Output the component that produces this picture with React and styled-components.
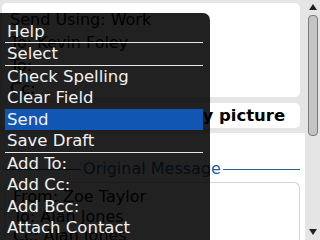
import React from 'react';
import styled, { createGlobalStyle } from 'styled-components';

const Global = createGlobalStyle`
  html, body { margin: 0; padding: 0; background: #e5e5e5; overflow: hidden; }
  body { font-family: "DejaVu Sans", "Noto Sans", sans-serif; }
`;

const Screen = styled.div`
  position: relative;
  width: 320px;
  height: 240px;
  overflow: hidden;
  display: flex;
  background: #e5e5e5;
`;

const Main = styled.div`
  flex: 1;
  min-width: 0;
  display: flex;
  flex-direction: column;
`;

const Header = styled.div`
  display: flex;
  flex-direction: column;
  gap: 6px;
  padding: 3px 5px 5px 2px;
`;

const Panel = styled.div`
  background: #fff;
  border-radius: 5px;
  height: ${p => p.$h}px;
  padding: ${p => p.$pad};
  box-sizing: border-box;
  display: flex;
  flex-direction: column;
  overflow: hidden;
`;

const FieldLine = styled.div`
  font-size: 16px;
  line-height: 23px;
  color: #000;
  white-space: nowrap;
`;

const SubjectLine = styled.div`
  font-size: 16px;
  line-height: 23px;
  color: #000;
  white-space: nowrap;
  display: flex;
  gap: 72px;
`;

const Bold = styled.span`
  font-weight: bold;
  font-size: 16.5px;
`;

const Body = styled.div`
  flex: 1;
  background: #fff;
  display: flex;
  flex-direction: column;
  padding: 27px 5px 0 4px;
`;

const Divider = styled.div`
  display: flex;
  align-items: center;
  gap: 2px;
  color: #1f5ea6;
  font-size: 16px;
  line-height: 18px;
  &::before, &::after {
    content: '';
    flex: 1;
    height: 1px;
    background: #1f5ea6;
  }
`;

const Quote = styled.div`
  margin-top: 4px;
  flex: 1;
  border: 1.5px solid #d4d4d4;
  border-bottom: none;
  border-radius: 6px 6px 0 0;
  padding: 4px 8px;
  display: flex;
  flex-direction: column;
`;

const QuoteLine = styled.div`
  font-size: 16px;
  line-height: 19.5px;
  color: #000;
  white-space: nowrap;
`;

const ScrollCol = styled.div`
  width: 15px;
  display: flex;
  flex-direction: column;
  align-items: center;
  padding: 4px 0 5px;
  box-sizing: border-box;
  background: #e5e5e5;
`;

const Arrow = styled.div`
  width: 0;
  height: 0;
  border-left: 4px solid transparent;
  border-right: 4px solid transparent;
  ${p => p.$down
    ? 'border-top: 6px solid #222; margin-top: auto;'
    : 'border-bottom: 6px solid #222;'}
`;

const Thumb = styled.div`
  margin-top: 5px;
  width: 8px;
  height: 119px;
  border-radius: 4px;
  background: #c4c4c4;
  border: 1px solid #7a7a7a;
`;

const Menu = styled.div`
  position: absolute;
  left: 0;
  top: 13px;
  width: 210px;
  height: 240px;
  box-sizing: border-box;
  padding: 7.5px 7px 0 5px;
  background: rgba(0, 0, 0, 0.87);
  border-top-right-radius: 7px;
  display: flex;
  flex-direction: column;
`;

const Item = styled.div`
  height: 21.5px;
  line-height: 21.5px;
  padding-left: 2px;
  font-size: 16.5px;
  color: #f2f2f2;
  white-space: nowrap;
  background: ${p => (p.$active ? '#1156b2' : 'transparent')};
`;

const Sep = styled.div`
  height: 1px;
  background: #e8e8e8;
`;

const menu = [
  'Help', '-', 'Select', '-', 'Check Spelling', 'Clear Field', 'Send', 'Save Draft', '-',
  'Add To:', 'Add Cc:', 'Add Bcc:', 'Attach Contact',
];

export default function App() {
  return (
    <>
      <Global />
      <Screen>
        <Main>
          <Header>
            <Panel $h={94} $pad="5px 8px 0">
              <FieldLine>Send Using: Work</FieldLine>
              <FieldLine>To: Kevin Foley</FieldLine>
              <FieldLine>To:</FieldLine>
              <FieldLine>Cc:</FieldLine>
            </Panel>
            <Panel $h={25} $pad="1px 8px">
              <SubjectLine>
                <span>Subject:</span>
                <Bold>Fw: My picture</Bold>
              </SubjectLine>
            </Panel>
          </Header>
          <Body>
            <Divider>Original Message</Divider>
            <Quote>
              <QuoteLine>From: Zoe Taylor</QuoteLine>
              <QuoteLine>To: Alan Jones</QuoteLine>
              <QuoteLine>Cc: Alan Jones</QuoteLine>
            </Quote>
          </Body>
        </Main>
        <ScrollCol>
          <Arrow />
          <Thumb />
          <Arrow $down />
        </ScrollCol>
        <Menu>
          {menu.map((m, i) =>
            m === '-' ? <Sep key={i} /> : <Item key={i} $active={m === 'Send'}>{m}</Item>
          )}
        </Menu>
      </Screen>
    </>
  );
}
